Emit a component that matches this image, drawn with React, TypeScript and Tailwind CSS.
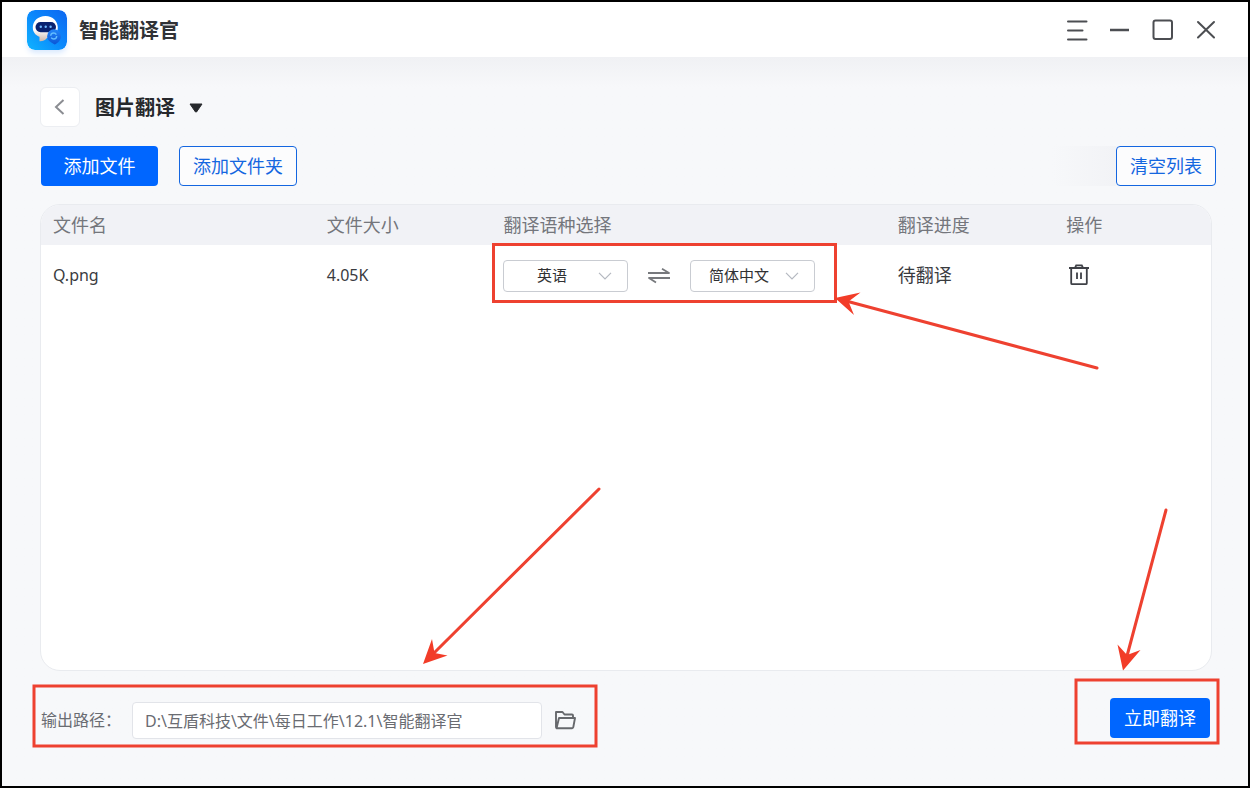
import { useState } from "react";

const LANGUAGES = ["英语", "简体中文"];

function Logo() {
  return (
    <svg viewBox="0 0 40 40" className="size-10 rounded-lg shadow-md shadow-blue-100" aria-hidden="true">
      <defs>
        <linearGradient id="logo-bg" x1="0" y1="1" x2="1" y2="0">
          <stop offset="0" stopColor="#10b4ff" />
          <stop offset="0.5" stopColor="#0a88fc" />
          <stop offset="1" stopColor="#0d66f0" />
        </linearGradient>
        <linearGradient id="logo-head" x1="0" y1="0" x2="0" y2="1">
          <stop offset="0.55" stopColor="#ffffff" />
          <stop offset="1" stopColor="#cdb5aa" />
        </linearGradient>
        <linearGradient id="logo-badge" x1="0" y1="0" x2="0" y2="1">
          <stop offset="0" stopColor="#2385f8" />
          <stop offset="1" stopColor="#0a55d6" />
        </linearGradient>
      </defs>
      <rect width="40" height="40" rx="8" fill="url(#logo-bg)" />
      <path d="M18.500 6C11 6 5.800 11 5.800 17.500c0 4.500 2.700 7.800 6.700 9.300v4.400c3 .2 5.500-.8 7.500-3.200C26 27.500 30.800 23.500 30.800 17.500S26 6 18.500 6z" fill="url(#logo-head)" />
      <rect x="8.500" y="12" width="20.500" height="10.200" rx="5.100" fill="#0a2270" />
      <circle cx="13.800" cy="16.800" r="1.200" fill="#6fb8ff" />
      <circle cx="18.700" cy="16.800" r="1.200" fill="#6fb8ff" />
      <circle cx="23.600" cy="16.800" r="1.200" fill="#6fb8ff" />
      <path d="M27 19.300a6.900 6.900 0 0 1 6.900 6.900c0 4-2.900 6.600-5.900 8.300-1.800-.9-7.900-3.500-7.900-8.300a6.900 6.900 0 0 1 6.900-6.900z" fill="url(#logo-badge)" />
      <circle cx="26.700" cy="26" r="3" fill="none" stroke="#62bcff" strokeWidth="1.400" strokeDasharray="7.500 1.900" />
    </svg>
  );
}

function LanguageSelect({ label, initial }: { label: string; initial: string }) {
  const [value, setValue] = useState(initial);
  return (
    <div className="relative w-[125px]">
      <select
        aria-label={label}
        value={value}
        onChange={(e) => setValue(e.target.value)}
        className="block h-8 w-full appearance-none rounded-sm border border-[#c9ccd2] bg-white pr-7 text-[15px] text-[#303133] [text-align-last:center]"
      >
        {LANGUAGES.map((l) => (
          <option key={l}>{l}</option>
        ))}
      </select>
      <svg viewBox="0 0 14 8" className="pointer-events-none absolute top-3 right-4 h-2 w-3.5" fill="none" stroke="#b4b8c0" strokeWidth="1.200" aria-hidden="true">
        <path d="M1 .8l6 6 6-6" />
      </svg>
    </div>
  );
}

function Annotations() {
  return (
    <svg viewBox="0 0 1251 789" className="pointer-events-none absolute top-0 left-0 h-[789px] w-[1251px]" fill="none" stroke="#ee4130" strokeWidth="3" aria-hidden="true">
      <rect x="493.500" y="244.500" width="342" height="57" />
      <rect x="34" y="686" width="562" height="60" />
      <rect x="1076" y="680" width="142" height="63" />
      <g strokeLinecap="round">
        <path d="M1097 368L848 301.500" />
        <path d="M599 489L432 655" />
        <path d="M1166 510L1127 656" />
      </g>
      <g fill="#f23c28" stroke="none">
        <path d="M835 298L860.500 292.500 848.500 301.500 854 315z" />
        <path d="M423 664L432 639 434.500 653 447.500 655.500z" />
        <path d="M1123 670.500L1117.500 644.500 1127 655 1140.500 650z" />
      </g>
    </svg>
  );
}

const outlineButton = "h-10 rounded-sm border border-[#1466e0] bg-white/60 text-[18px] text-[#1466e0]";
const cell = "pl-3 text-left font-normal";

export default function App() {
  return (
    <div className="relative flex min-h-screen bg-white pr-px pb-px font-['Noto_Sans','Noto_Sans_CJK_SC',sans-serif]">
      <div className="flex flex-1 flex-col border-2 border-black bg-[#f7f8fa]">
        <header className="flex h-[55px] shrink-0 items-center bg-white pr-[31px] pl-[25px]">
          <Logo />
          <h1 className="ml-3 pt-0.5 text-[20px] font-bold text-[#303236]">智能翻译官</h1>
          <div className="ml-auto flex items-center gap-[21px] text-[#4c4e52]">
            <button type="button" aria-label="菜单">
              <svg viewBox="0 0 22 22" className="size-[22px]" fill="none" stroke="currentColor" strokeWidth="2" strokeLinecap="round">
                <path d="M2 2.500h18.500M2 11.500h14.500M2 20.500h18.500" />
              </svg>
            </button>
            <button type="button" aria-label="最小化">
              <svg viewBox="0 0 22 22" className="size-[22px]" fill="none" stroke="currentColor" strokeWidth="2.500">
                <path d="M1 11h19" />
              </svg>
            </button>
            <button type="button" aria-label="最大化">
              <svg viewBox="0 0 22 22" className="size-[22px]" fill="none" stroke="currentColor" strokeWidth="2">
                <rect x="1.500" y="1.500" width="18.500" height="18.500" rx="2" />
              </svg>
            </button>
            <button type="button" aria-label="关闭">
              <svg viewBox="0 0 22 22" className="size-[22px]" fill="none" stroke="currentColor" strokeWidth="2" strokeLinecap="round">
                <path d="M3 3l16 15.500M19 3L3 18.500" />
              </svg>
            </button>
          </div>
        </header>

        <main className="flex flex-1 flex-col bg-linear-to-b from-[#f0f1f4] to-[#f7f8fa] to-[30px] pt-[30px] pr-8 pb-12 pl-[38px]">
          <div className="flex items-center">
            <button type="button" aria-label="返回" className="flex size-10 items-center justify-center rounded-md border border-[#eceef2] bg-white">
              <svg viewBox="0 0 12 16" className="h-4 w-3" fill="none" stroke="#8b8d92" strokeWidth="2">
                <path d="M9.500 1L2 8l7.500 7" />
              </svg>
            </button>
            <button type="button" className="ml-[15px] flex items-center gap-3.5 pt-0.5 text-[20px] font-bold text-[#26282c]">
              图片翻译
              <svg viewBox="0 0 14 10" className="h-2.5 w-3.5" fill="#26282c" stroke="#26282c" strokeLinejoin="round" aria-hidden="true">
                <path d="M1 1h12L7.500 9h-1z" />
              </svg>
            </button>
          </div>

          <div className="mt-[19px] ml-px flex items-center">
            <button type="button" className="h-10 w-[117px] rounded-sm bg-[#0066ff] text-[18px] text-white">添加文件</button>
            <button type="button" className={`${outlineButton} ml-[21px] w-[118px]`}>添加文件夹</button>
            <div className="ml-auto h-10 w-16 bg-linear-to-r from-[#f7f8fa] to-[#f2f3f6]" />
            <button type="button" className={`${outlineButton} w-[100px]`}>清空列表</button>
          </div>

          <section className="mt-[18px] mr-1 flex-1 overflow-hidden rounded-[20px] border border-[#e9ebef] bg-white">
            <table className="w-full table-fixed border-collapse text-[18px]">
              <thead className="bg-[#f1f2f6] text-[#74767c]">
                <tr className="h-10">
                  <th className={`${cell} w-[23.4%]`}>文件名</th>
                  <th className={`${cell} w-[15.1%]`}>文件大小</th>
                  <th className={`${cell} w-[33.7%]`}>翻译语种选择</th>
                  <th className={`${cell} w-[14.4%]`}>翻译进度</th>
                  <th className={cell}>操作</th>
                </tr>
              </thead>
              <tbody className="text-[#3a3b3f]">
                <tr className="h-[60px]">
                  <td className={`${cell} text-[16px]`}>Q.png</td>
                  <td className={`${cell} text-[16px]`}>4.05K</td>
                  <td className={cell}>
                    <div className="flex items-center pt-px">
                      <LanguageSelect label="源语言" initial="英语" />
                      <button type="button" aria-label="交换语言" className="mx-5">
                        <svg viewBox="0 0 22 16" className="h-4 w-[22px]" fill="none" stroke="#77797d" strokeWidth="1.800" strokeLinejoin="round">
                          <path d="M0 5h21L14 .8M22 10H1L8 14.500" />
                        </svg>
                      </button>
                      <LanguageSelect label="目标语言" initial="简体中文" />
                    </div>
                  </td>
                  <td className={cell}>待翻译</td>
                  <td className={cell}>
                    <button type="button" aria-label="删除" className="ml-0.5 block">
                      <svg viewBox="0 0 22 22" className="size-[22px]" fill="none" stroke="#3e4046" strokeWidth="1.800">
                        <path d="M1 4h20M3.200 4v15.200q0 1 1 1h13.600q1 0 1-1V4M7 4l1.200-2.600h5.600L15 4M9 8.500v6.500M13 8.500v6.500" />
                      </svg>
                    </button>
                  </td>
                </tr>
              </tbody>
            </table>
          </section>

          <footer className="mt-[27px] mr-1.5 flex h-10 items-center text-[16px] text-[#6a6c72]">
            <div className="flex items-center pt-1">
              <label htmlFor="output-path" className="w-[92px] shrink-0 pl-px">输出路径：</label>
              <input
                id="output-path"
                defaultValue="D:\互盾科技\文件\每日工作\12.1\智能翻译官"
                className="h-[37px] w-[410px] rounded-sm border border-[#e2e4e9] bg-white px-3"
              />
              <button type="button" aria-label="选择文件夹" className="ml-3">
                <svg viewBox="0 0 22 20" className="h-5 w-[22px]" fill="none" stroke="#66686c" strokeWidth="1.900" strokeLinejoin="round">
                  <path d="M2.500 18.200Q2 18 2 17V2h6.500l2 2.500h7.500q1 0 1 1V8M2.500 18.200L5 8h16l-1.700 9.200q-.2 1-1.200 1z" />
                </svg>
              </button>
            </div>
            <button type="button" className="ml-auto h-10 w-[100px] rounded-sm bg-[#0066ff] text-[18px] text-white">立即翻译</button>
          </footer>
        </main>
      </div>
      <Annotations />
    </div>
  );
}
